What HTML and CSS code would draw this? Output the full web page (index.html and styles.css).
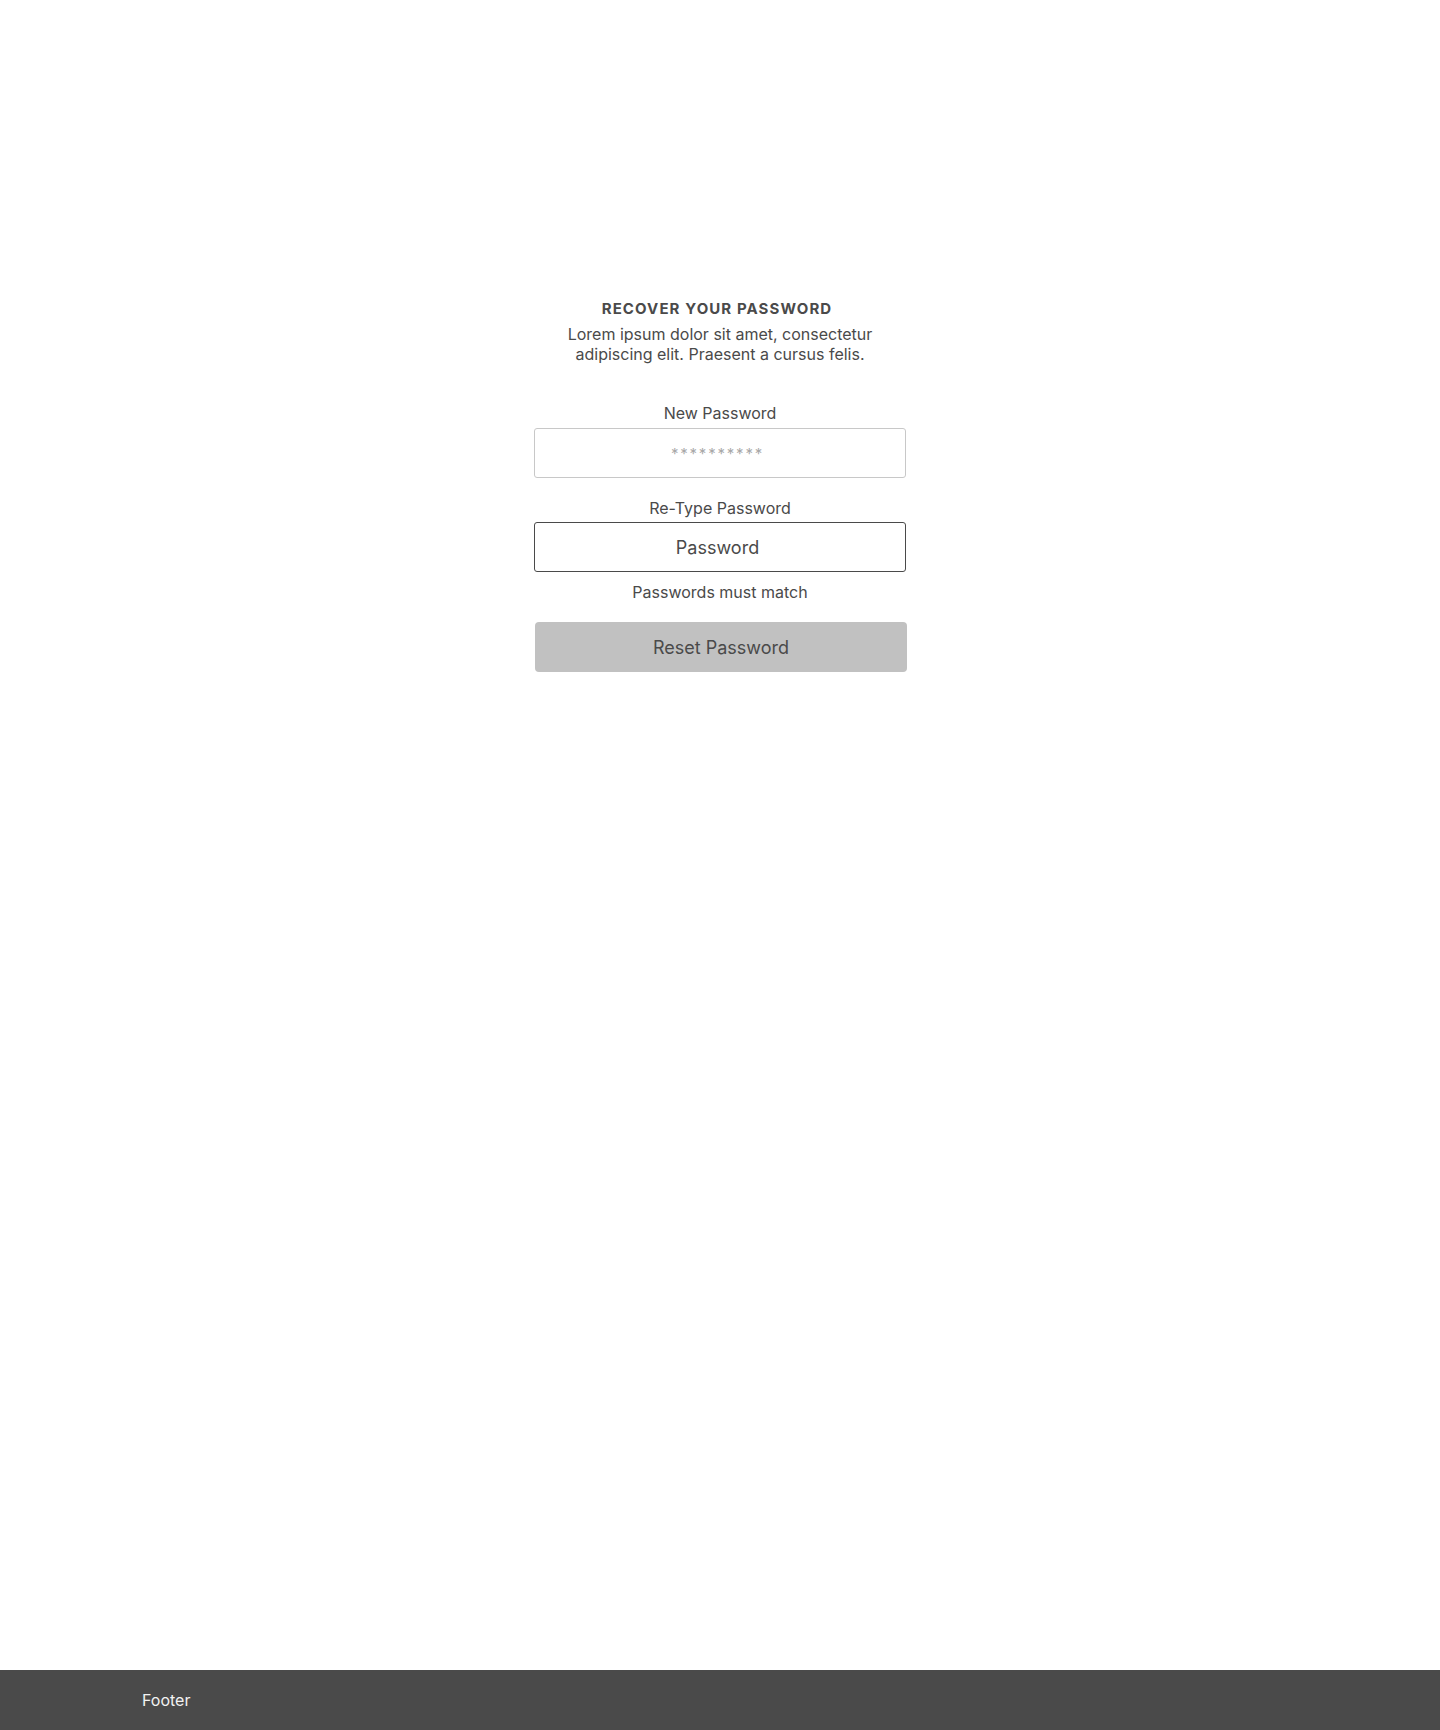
FILE: index.html
```html
<!DOCTYPE html>
<html lang="en">
<head>
<meta charset="utf-8">
<title>Recover your password</title>
<link rel="stylesheet" href="styles.css">
</head>
<body>
<div class="page">
  <main class="main">
    <section class="recover">
      <h1 class="title">RECOVER YOUR PASSWORD</h1>
      <p class="intro">Lorem ipsum dolor sit amet, consectetur adipiscing elit. Praesent a cursus felis.</p>
      <form class="form">
        <label class="label" for="pw1">New Password</label>
        <input class="input input-light" id="pw1" type="text" placeholder="**********">
        <label class="label label-second" for="pw2">Re-Type Password</label>
        <input class="input input-dark" id="pw2" type="text" placeholder="Password">
        <p class="hint">Passwords must match</p>
        <button class="button" type="button">Reset Password</button>
      </form>
    </section>
  </main>
  <footer class="footer">
    <span class="footer-text">Footer</span>
  </footer>
</div>
</body>
</html>
```
FILE: styles.css
```css
* { box-sizing: border-box; }
html, body { margin: 0; padding: 0; }
body {
  font-family: Inter, "Noto Sans", "Liberation Sans", sans-serif;
  color: #4a4a4a;
  background: #fff;
}
.page {
  display: flex;
  flex-direction: column;
  min-height: 1730px;
}
.main {
  flex: 1;
  display: flex;
  justify-content: center;
  padding-top: 300px;
}
.recover {
  width: 372px;
  display: flex;
  flex-direction: column;
  align-items: center;
  text-align: center;
}
.title {
  margin: 0 6px 0 0;
  font-size: 15px;
  line-height: 18px;
  font-weight: 700;
  letter-spacing: 1.1px;
  color: #4a4a4a;
}
.intro {
  margin: 6px 0 0;
  max-width: 320px;
  font-size: 16px;
  line-height: 20px;
}
.form {
  width: 100%;
  display: flex;
  flex-direction: column;
  align-items: center;
  margin-top: 39px;
}
.label {
  font-size: 16px;
  line-height: 20px;
  margin-bottom: 5px;
}
.label-second {
  margin-top: 20px;
  margin-bottom: 4px;
}
.input {
  width: 372px;
  height: 50px;
  padding: 0 5px 0 0;
  border-radius: 3px;
  background: #fff;
  text-align: center;
  font-family: inherit;
  outline: none;
}
.input-light {
  border: 1px solid #c8c8c8;
  font-size: 15px;
  letter-spacing: 1.8px;
}
.input-light::placeholder { color: #a8a8a8; }
.input-dark {
  border: 1px solid #4a4a4a;
  font-size: 18px;
}
.input-dark::placeholder { color: #4a4a4a; }
.hint {
  margin: 10px 0 0;
  font-size: 16px;
  line-height: 20px;
}
.button {
  margin-top: 20px;
  margin-left: 2px;
  width: 372px;
  height: 50px;
  border: none;
  border-radius: 4px;
  background: #c1c1c1;
  color: #4a4a4a;
  font-family: inherit;
  font-size: 18px;
}
.footer {
  height: 60px;
  background: #4a4a4a;
  display: flex;
  align-items: center;
  padding-left: 142px;
}
.footer-text {
  color: #f2f2f2;
  font-size: 16px;
}
```
